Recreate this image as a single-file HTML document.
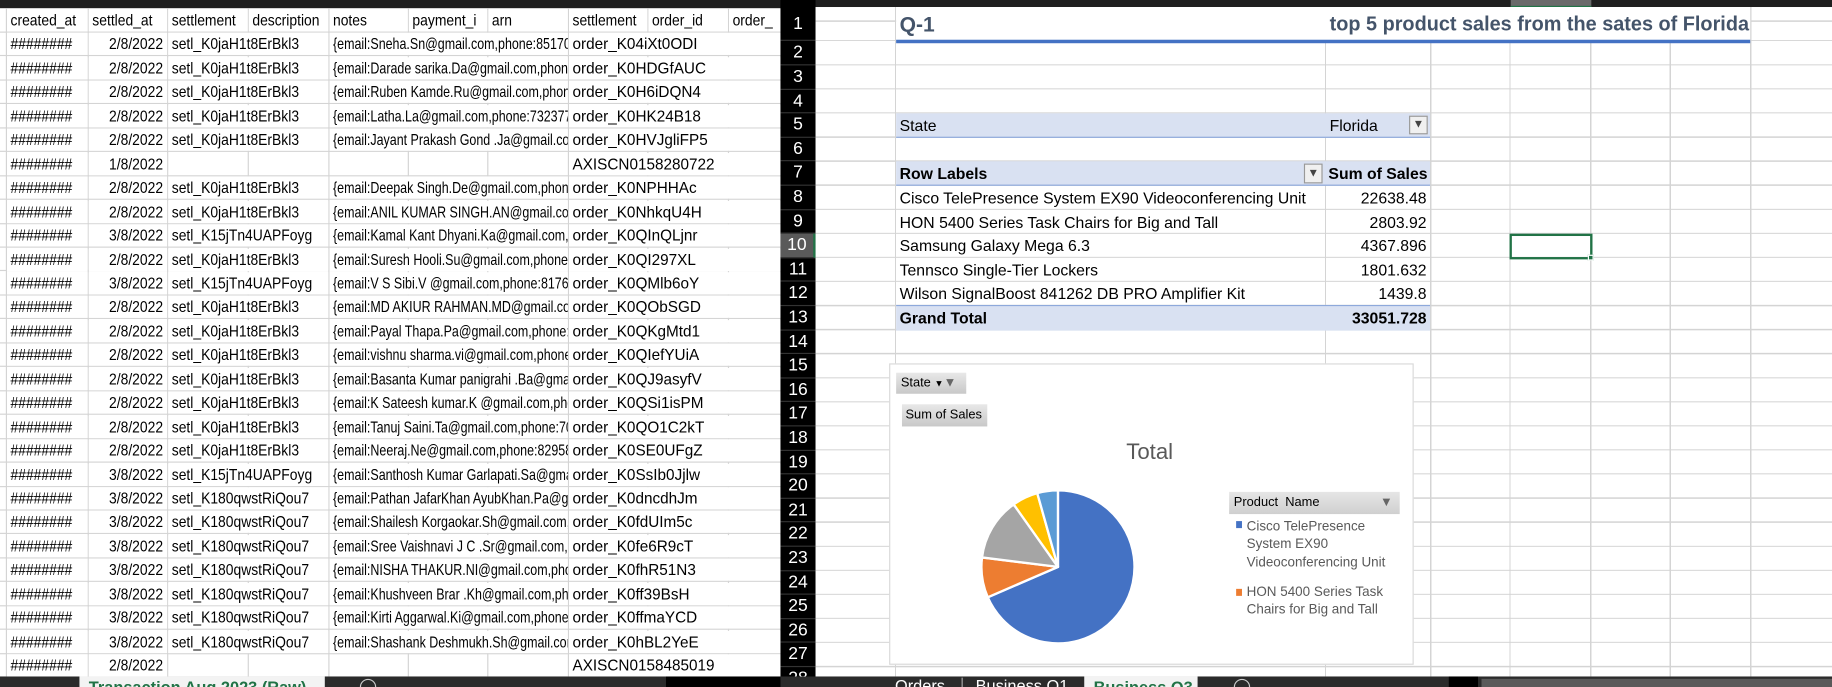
<!DOCTYPE html>
<html><head><meta charset="utf-8"><style>
*{margin:0;padding:0;box-sizing:border-box}
html,body{width:1832px;height:687px;overflow:hidden;background:#000}
#s{position:absolute;left:0;top:0;width:1568px;height:588px;transform:scale(1.16837);transform-origin:0 0;background:#000;overflow:hidden}
.a{position:absolute}
#L{position:absolute;left:0;top:7px;width:668px;height:572px;background:#fff}
.vl{position:absolute;top:0;width:1px;background:#d4d4d4}
.hl{position:absolute;left:0;width:668px;height:1px;background:#d4d4d4}
.t{position:absolute;height:19px;line-height:20px;background:#fff;font-family:"Liberation Sans",sans-serif;font-size:13.5px;color:#000;white-space:nowrap;overflow:hidden;padding-left:3px}
.t span{display:inline-block;transform:scaleX(0.88);transform-origin:0 0}
.t.n span{transform:scaleX(0.79)}
.t.o span{transform:scaleX(0.97)}
.r{text-align:right;padding-right:3px;padding-left:0}
.r span{transform-origin:100% 0}
#R{position:absolute;left:698px;top:6px;width:870px;height:573px;background:#fff}
.rt{position:absolute;font-family:"Liberation Sans",sans-serif;font-size:13.5px;line-height:20px;color:#000;white-space:nowrap}
.rn{position:absolute;left:668px;width:30px;text-align:center;color:#fff;font-family:"Liberation Sans",sans-serif;font-size:15px;border-bottom:1px solid #333}
</style></head><body><div id="s">
<div class="a" style="left:0;top:0;width:668px;height:7px;background:#1f1f1f"></div>
<div id="L">
<div class="vl" style="left:5px;height:572px"></div>
<div class="vl" style="left:75px;height:572px"></div>
<div class="vl" style="left:143px;height:572px"></div>
<div class="vl" style="left:212px;height:572px"></div>
<div class="vl" style="left:281px;height:572px"></div>
<div class="vl" style="left:349px;height:572px"></div>
<div class="vl" style="left:417px;height:572px"></div>
<div class="vl" style="left:486px;height:572px"></div>
<div class="vl" style="left:554px;height:572px"></div>
<div class="vl" style="left:623px;height:572px"></div>
<div id="HL"></div>
</div>
<div id="LT"></div>
<div class="a" style="left:668px;top:0;width:30px;height:588px;background:#000"></div>
<div class="a" style="left:698px;top:0;width:870px;height:6px;background:#1f1f1f"></div>
<div class="a" style="left:1293px;top:0;width:69px;height:6px;background:#6a6a6a;border-bottom:1px solid #217346"></div>
<div id="R" style="background-color:#fff;background-image:linear-gradient(to right,transparent 0,transparent 68px,#d4d4d4 68px,#d4d4d4 69px,transparent 69px,transparent 436px,#d4d4d4 436px,#d4d4d4 437px,transparent 437px,transparent 526px,#d4d4d4 526px,#d4d4d4 527px,transparent 527px,transparent 594px,#d4d4d4 594px,#d4d4d4 595px,transparent 595px,transparent 663px,#d4d4d4 663px,#d4d4d4 664px,transparent 664px,transparent 731px,#d4d4d4 731px,#d4d4d4 732px,transparent 732px,transparent 800px,#d4d4d4 800px,#d4d4d4 801px,transparent 801px),repeating-linear-gradient(to bottom,transparent 0,transparent 28.4px,#d4d4d4 28.4px,#d4d4d4 29.4px,transparent 29.4px,transparent 29.4px),repeating-linear-gradient(to bottom,transparent 0,transparent 19.6px,#d4d4d4 19.6px,#d4d4d4 20.6px);background-size:100% 100%,100% 29.4px,100% 100%;background-position:0 0,0 0,0 29.4px;background-repeat:no-repeat,no-repeat,repeat-y"></div>
<div class="a" style="left:767px;top:6px;width:731px;height:29px;background:#fff"></div>
<div class="rt" style="left:770px;top:10px;font-size:18px;line-height:22px;font-weight:bold;color:#44546a">Q-1</div>
<div class="rt" style="left:1138px;top:10px;font-size:17px;line-height:22px;font-weight:bold;color:#44546a">top 5 product sales from the sates of Florida</div>
<div class="a" style="left:767px;top:34px;width:731px;height:3px;background:#4472c4"></div>
<div class="a" style="left:767px;top:97.2px;width:457px;height:20.6px;background:#d9e1f2;border-bottom:1px solid #8ea9db"></div>
<div class="rt" style="left:770px;top:98px">State</div>
<div class="rt" style="left:1138px;top:98px">Florida</div>
<div class="a" style="left:1206px;top:99px;width:16px;height:16px;border:1px solid #999;background:#f0f0f0;font-size:10px;text-align:center;line-height:14px;color:#444">&#9660;</div>
<div class="a" style="left:767px;top:138.4px;width:457px;height:20.6px;background:#d9e1f2;border-bottom:1px solid #8ea9db"></div>
<div class="rt" style="left:770px;top:139px;font-weight:bold">Row Labels</div>
<div class="rt" style="left:1137px;top:139px;font-weight:bold">Sum of Sales</div>
<div class="a" style="left:1116px;top:140px;width:16px;height:17px;border:1px solid #999;background:#f0f0f0;font-size:10px;text-align:center;line-height:15px;color:#444">&#9660;</div>
<div class="rt" style="left:770px;top:160px">Cisco TelePresence System EX90 Videoconferencing Unit</div><div class="rt" style="left:1135px;width:86px;text-align:right;top:160px">22638.48</div>
<div class="rt" style="left:770px;top:180.6px">HON 5400 Series Task Chairs for Big and Tall</div><div class="rt" style="left:1135px;width:86px;text-align:right;top:180.6px">2803.92</div>
<div class="rt" style="left:770px;top:201.2px">Samsung Galaxy Mega 6.3</div><div class="rt" style="left:1135px;width:86px;text-align:right;top:201.2px">4367.896</div>
<div class="rt" style="left:770px;top:221.8px">Tennsco Single-Tier Lockers</div><div class="rt" style="left:1135px;width:86px;text-align:right;top:221.8px">1801.632</div>
<div class="rt" style="left:770px;top:242.4px">Wilson SignalBoost 841262 DB PRO Amplifier Kit</div><div class="rt" style="left:1135px;width:86px;text-align:right;top:242.4px">1439.8</div>
<div class="a" style="left:767px;top:261.4px;width:457px;height:21.6px;background:#d9e1f2;border-top:1px solid #8ea9db"></div>
<div class="rt" style="left:770px;top:262.5px;font-weight:bold">Grand Total</div><div class="rt" style="left:1135px;width:86px;text-align:right;top:262.5px;font-weight:bold">33051.728</div>
<div class="a" style="left:1292px;top:199.5px;width:71px;height:22px;border:2px solid #217346"></div>
<div class="a" style="left:1359px;top:218px;width:5px;height:5px;background:#217346;border:1px solid #fff"></div>
<div class="a" style="left:760.7px;top:310.5px;width:449px;height:258px;background:#fff;border:1px solid #d9d9d9"></div>
<div class="a" style="left:767px;top:319px;width:60px;height:18px;background:linear-gradient(#e8e8e8,#c8c8c8);font-family:'Liberation Sans',sans-serif;font-size:11px;line-height:18px;padding-left:4px;color:#000">State <span style="font-size:8px">&#9660;</span><span style="color:#666">&#9660;</span></div>
<div class="a" style="left:772px;top:346px;width:73px;height:19px;background:linear-gradient(#e8e8e8,#c8c8c8);font-family:'Liberation Sans',sans-serif;font-size:11px;line-height:19px;padding-left:3px;color:#000">Sum of Sales</div>
<div class="a" style="left:934px;top:377px;width:100px;text-align:center;font-family:'Liberation Sans',sans-serif;font-size:19px;color:#595959">Total</div>
<svg class="a" style="left:0;top:0" width="1568" height="588">
<g stroke="#fff" stroke-width="2" stroke-linejoin="round">
<path d="M905.5 485.2 L905.5 419.7 A65.5 65.5 0 1 1 845.4 511.2 Z" fill="#4472c4"/>
<path d="M905.5 485.2 L845.4 511.2 A65.5 65.5 0 0 1 840.5 477.1 Z" fill="#ed7d31"/>
<path d="M905.5 485.2 L840.5 477.1 A65.5 65.5 0 0 1 867.6 431.7 Z" fill="#a5a5a5"/>
<path d="M905.5 485.2 L867.6 431.7 A65.5 65.5 0 0 1 887.8 422.1 Z" fill="#ffc000"/>
<path d="M905.5 485.2 L887.8 422.1 A65.5 65.5 0 0 1 905.5 419.7 Z" fill="#5b9bd5"/>
</g></svg>
<div class="a" style="left:1052px;top:421px;width:146px;height:19px;background:linear-gradient(#e6e6e6,#cfcfcf);font-family:'Liberation Sans',sans-serif;font-size:11px;line-height:19px;padding-left:4px;color:#000">Product&nbsp; Name<span style="position:absolute;right:6px;color:#666">&#9660;</span></div>
<div class="a" style="left:1058px;top:446px;width:5px;height:6px;background:#4472c4"></div>
<div class="a" style="left:1067px;top:444px;font-family:'Liberation Sans',sans-serif;font-size:11.5px;line-height:15.3px;color:#595959">Cisco TelePresence<br>System EX90<br>Videoconferencing Unit</div>
<div class="a" style="left:1058px;top:504px;width:5px;height:6px;background:#ed7d31"></div>
<div class="a" style="left:1067px;top:500px;font-family:'Liberation Sans',sans-serif;font-size:11.5px;line-height:15.3px;color:#595959">HON 5400 Series Task<br>Chairs for Big and Tall</div>
<div id="RN"></div>
<div class="a" style="left:0;top:579px;width:668px;height:9px;background:#2b2b2b"></div>
<div class="a" style="left:68px;top:579px;width:210px;height:9px;background:#f3f3f3;overflow:hidden;font-family:'Liberation Sans',sans-serif;font-size:14px;font-weight:bold;color:#217346;padding-left:8px;line-height:18px">Transaction Aug 2023 (Raw)</div>
<div class="a" style="left:308px;top:581px;width:14px;height:14px;border:1px solid #ccc;border-radius:50%"></div>
<div class="a" style="left:570px;top:579px;width:98px;height:9px;background:#000"></div>
<div class="a" style="left:668px;top:579px;width:900px;height:9px;background:#2b2b2b"></div>
<div class="a" style="left:766px;top:578px;height:10px;overflow:hidden;font-family:'Liberation Sans',sans-serif;font-size:14px;color:#fff;line-height:18px">Orders</div>
<div class="a" style="left:823px;top:580px;width:1px;height:8px;background:#aaa"></div>
<div class="a" style="left:835px;top:578px;height:10px;overflow:hidden;font-family:'Liberation Sans',sans-serif;font-size:14px;color:#fff;line-height:18px">Business Q1</div>
<div class="a" style="left:928px;top:579px;width:97px;height:9px;background:#f3f3f3;overflow:hidden;font-family:'Liberation Sans',sans-serif;font-size:14px;font-weight:bold;color:#217346;padding-left:8px;line-height:18px">Business Q3</div>
<div class="a" style="left:1056px;top:581px;width:14px;height:14px;border:1px solid #ccc;border-radius:50%"></div>
<div class="a" style="left:1240px;top:579px;width:25px;height:9px;background:#000"></div>
<div class="a" style="left:1268px;top:581px;width:300px;height:7px;background:#5a5a5a"></div>
</div>
<script>
var head=["created_at","settled_at","settlement","description","notes","payment_i","arn","settlement","order_id","order_"];
var d=[
["2/8/2022","setl_K0jaH1t8ErBkl3","{email:Sneha.Sn@gmail.com,phone:851700","order_K04iXt0ODI"],
["2/8/2022","setl_K0jaH1t8ErBkl3","{email:Darade sarika.Da@gmail.com,phone","order_K0HDGfAUC"],
["2/8/2022","setl_K0jaH1t8ErBkl3","{email:Ruben Kamde.Ru@gmail.com,phone","order_K0H6iDQN4"],
["2/8/2022","setl_K0jaH1t8ErBkl3","{email:Latha.La@gmail.com,phone:732377","order_K0HK24B18"],
["2/8/2022","setl_K0jaH1t8ErBkl3","{email:Jayant Prakash Gond .Ja@gmail.com","order_K0HVJgliFP5"],
["1/8/2022","","","AXISCN0158280722"],
["2/8/2022","setl_K0jaH1t8ErBkl3","{email:Deepak Singh.De@gmail.com,phone","order_K0NPHHAc"],
["2/8/2022","setl_K0jaH1t8ErBkl3","{email:ANIL KUMAR SINGH.AN@gmail.com","order_K0NhkqU4H"],
["3/8/2022","setl_K15jTn4UAPFoyg","{email:Kamal Kant Dhyani.Ka@gmail.com,p","order_K0QInQLjnr"],
["2/8/2022","setl_K0jaH1t8ErBkl3","{email:Suresh Hooli.Su@gmail.com,phone:9","order_K0QI297XL"],
["3/8/2022","setl_K15jTn4UAPFoyg","{email:V S Sibi.V @gmail.com,phone:81769","order_K0QMlb6oY"],
["2/8/2022","setl_K0jaH1t8ErBkl3","{email:MD AKIUR RAHMAN.MD@gmail.com","order_K0QObSGD"],
["2/8/2022","setl_K0jaH1t8ErBkl3","{email:Payal Thapa.Pa@gmail.com,phone:9","order_K0QKgMtd1"],
["2/8/2022","setl_K0jaH1t8ErBkl3","{email:vishnu sharma.vi@gmail.com,phone","order_K0QIefYUiA"],
["2/8/2022","setl_K0jaH1t8ErBkl3","{email:Basanta Kumar panigrahi .Ba@gmail","order_K0QJ9asyfV"],
["2/8/2022","setl_K0jaH1t8ErBkl3","{email:K Sateesh kumar.K @gmail.com,phon","order_K0QSi1isPM"],
["2/8/2022","setl_K0jaH1t8ErBkl3","{email:Tanuj Saini.Ta@gmail.com,phone:70","order_K0QO1C2kT"],
["2/8/2022","setl_K0jaH1t8ErBkl3","{email:Neeraj.Ne@gmail.com,phone:82958","order_K0SE0UFgZ"],
["3/8/2022","setl_K15jTn4UAPFoyg","{email:Santhosh Kumar Garlapati.Sa@gmail","order_K0SsIb0Jjlw"],
["3/8/2022","setl_K180qwstRiQou7","{email:Pathan JafarKhan AyubKhan.Pa@gm","order_K0dncdhJm"],
["3/8/2022","setl_K180qwstRiQou7","{email:Shailesh Korgaokar.Sh@gmail.com,p","order_K0fdUIm5c"],
["3/8/2022","setl_K180qwstRiQou7","{email:Sree Vaishnavi J C .Sr@gmail.com,ph","order_K0fe6R9cT"],
["3/8/2022","setl_K180qwstRiQou7","{email:NISHA THAKUR.NI@gmail.com,phon","order_K0fhR51N3"],
["3/8/2022","setl_K180qwstRiQou7","{email:Khushveen Brar .Kh@gmail.com,pho","order_K0ff39BsH"],
["3/8/2022","setl_K180qwstRiQou7","{email:Kirti Aggarwal.Ki@gmail.com,phone:","order_K0ffmaYCD"],
["3/8/2022","setl_K180qwstRiQou7","{email:Shashank Deshmukh.Sh@gmail.com,","order_K0hBL2YeE"],
["2/8/2022","","","AXISCN0158485019"]];
var h="";
function sp(x,y,w,t,c){return '<div class="t '+(c||'')+'" style="left:'+x+'px;top:'+y+'px;width:'+w+'px"><span>'+t+'</span></div>';}
var hx=[6,76,144,213,282,350,418,487,555,624],hw=[69,67,68,68,67,67,68,67,68,44];
for(var i=0;i<10;i++)h+=sp(hx[i],8,hw[i],head[i]);
for(var r=0;r<d.length;r++){var y=8+(r+1)*20.45,q=d[r];
h+=sp(6,y,69,"########");
h+=sp(76,y,67,q[0],"r");
if(q[1])h+=sp(144,y,137,q[1]);
if(q[2])h+=sp(282,y,204,q[2],"n");
h+=sp(487,y,181,q[3],"o");}
document.getElementById("LT").outerHTML=h;
var hl="";for(var r=1;r<=28;r++){hl+='<div class="hl" style="top:'+(r*20.45-0.5)+'px"></div>';}
document.getElementById("HL").outerHTML=hl;
var n='<div class="rn" style="top:6px;height:29.4px;line-height:29px">1</div>';
for(var k=2;k<=28;k++){var t=35.4+(k-2)*20.6;n+='<div class="rn" style="top:'+t+'px;height:20.6px;line-height:20px;'+(k==10?'background:#5a5a5a;border-right:2px solid #217346':'')+'">'+k+'</div>';}
document.getElementById("RN").outerHTML=n;
</script>
</body></html>
